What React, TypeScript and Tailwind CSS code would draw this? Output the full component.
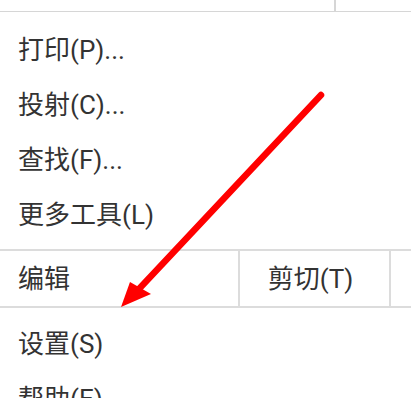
import React from 'react';

const menuTop = ['打印(P)...', '投射(C)...', '查找(F)...', '更多工具(L)'];
const menuBottom = ['设置(S)', '帮助(E)'];

function MenuItem({ label }: { label: string }) {
    return (
        <div className="h-[55px] flex items-center pl-[18px] text-[26px] text-[#333333] leading-none">
            {label}
        </div>
    );
}

export default function App() {
    return (
        <div
            className="relative w-[411px] h-[398px] overflow-hidden bg-white"
            style={{ fontFamily: 'Roboto, "Noto Sans CJK SC", sans-serif' }}
        >
            {/* row above, mostly scrolled out */}
            <div className="flex h-[12px] border-b border-[#d6d6d6]">
                <div className="w-[336px] border-r-2 border-[#d6d6d6]" />
                <div className="flex-1" />
            </div>

            <div className="pt-[10px] pb-[7px]">
                {menuTop.map(label => (
                    <MenuItem key={label} label={label} />
                ))}
            </div>

            {/* edit row */}
            <div className="flex h-[59px] border-y-2 border-[#dcdcdc] text-[26px] text-[#333333] leading-none">
                <div className="w-[240px] flex items-center pl-[18px] border-r-2 border-[#dcdcdc]">编辑</div>
                <div className="w-[151px] flex items-center justify-center pr-[8px] border-r-2 border-[#dcdcdc]">剪切(T)</div>
                <div className="flex-1" />
            </div>

            <div className="pt-[8px]">
                {menuBottom.map(label => (
                    <MenuItem key={label} label={label} />
                ))}
            </div>

            {/* annotation arrow */}
            <svg className="absolute inset-0 pointer-events-none" width="411" height="409" viewBox="0 0 411 409">
                <line x1="321" y1="95" x2="138" y2="290" stroke="#ff0000" strokeWidth="6.5" strokeLinecap="round" />
                <polygon points="121,307 130,282 151,294" fill="#ff0000" />
            </svg>
        </div>
    );
}
